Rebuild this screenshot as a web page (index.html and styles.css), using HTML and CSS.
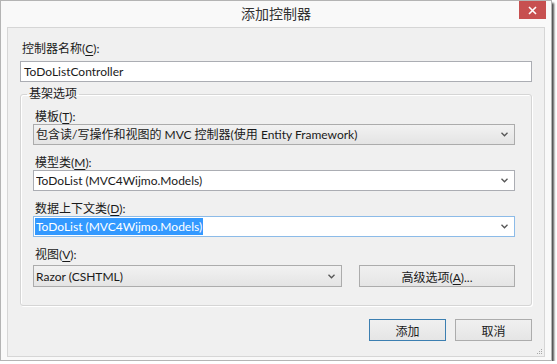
FILE: index.html
```html
<!DOCTYPE html>
<html lang="zh-CN">
  <head>
    <meta charset="UTF-8" />
    <title>添加控制器</title>
    <link rel="stylesheet" href="styles.css">
  </head>
  <body>
    <div class="window">
      <div class="titlebar">
        <span class="title">添加控制器</span>
        <button class="close" aria-label="关闭">
          <svg width="9" height="9" viewBox="0 0 9 9">
            <path d="M1 1 L8 8 M8 1 L1 8" stroke="#fff" stroke-width="1.6" />
          </svg>
        </button>
      </div>

      <div class="client">
        <div class="label">控制器名称(<u>C</u>):</div>
        <div class="textbox">ToDoListController</div>

        <fieldset class="group">
          <legend>基架选项</legend>

          <div class="field">
            <div class="label">模板(<u>T</u>):</div>
            <div class="combo readonly">
              <span class="value">包含读/写操作和视图的 MVC 控制器(使用 Entity Framework)</span>
              <svg class="arrow" width="7" height="5" viewBox="0 0 7 5"><path d="M0.5 0.8 L3.5 3.8 L6.5 0.8" fill="none" stroke="#555" stroke-width="1.3" /></svg>
            </div>
          </div>

          <div class="field">
            <div class="label">模型类(<u>M</u>):</div>
            <div class="combo">
              <span class="value">ToDoList (MVC4Wijmo.Models)</span>
              <svg class="arrow" width="7" height="5" viewBox="0 0 7 5"><path d="M0.5 0.8 L3.5 3.8 L6.5 0.8" fill="none" stroke="#555" stroke-width="1.3" /></svg>
            </div>
          </div>

          <div class="field">
            <div class="label">数据上下文类(<u>D</u>):</div>
            <div class="combo focused">
              <span class="value"><span class="selection">ToDoList (MVC4Wijmo.Models)</span></span>
              <svg class="arrow" width="7" height="5" viewBox="0 0 7 5"><path d="M0.5 0.8 L3.5 3.8 L6.5 0.8" fill="none" stroke="#555" stroke-width="1.3" /></svg>
            </div>
          </div>

          <div class="field">
            <div class="label">视图(<u>V</u>):</div>
            <div class="view_row">
              <div class="combo readonly view">
                <span class="value">Razor (CSHTML)</span>
                <svg class="arrow" width="7" height="5" viewBox="0 0 7 5"><path d="M0.5 0.8 L3.5 3.8 L6.5 0.8" fill="none" stroke="#555" stroke-width="1.3" /></svg>
              </div>
              <button class="btn advanced">高级选项(<u>A</u>)...</button>
            </div>
          </div>
        </fieldset>

        <div class="actions">
          <button class="btn default">添加</button>
          <button class="btn">取消</button>
        </div>

        <svg class="grip" width="7" height="7" viewBox="0 0 7 7">
          <rect x="5" y="1" width="1" height="1" fill="#a8a8a8" />
          <rect x="3" y="3" width="1" height="1" fill="#a8a8a8" />
          <rect x="5" y="3" width="1" height="1" fill="#a8a8a8" />
          <rect x="1" y="5" width="1" height="1" fill="#a8a8a8" />
          <rect x="3" y="5" width="1" height="1" fill="#a8a8a8" />
          <rect x="5" y="5" width="1" height="1" fill="#a8a8a8" />
        </svg>
      </div>
    </div>
  </body>
</html>
```
FILE: styles.css
```css
* {
  box-sizing: border-box;
}
body {
  margin: 0;
  background: #fff;
  font-family: Lato, "Noto Sans CJK SC", sans-serif;
  font-size: 12px;
  color: #1a1a1a;
}
u {
  text-decoration-thickness: 1px;
  text-underline-offset: 2px;
}

.window {
  width: 552px;
  padding: 0 6px 3px 6px;
  background: #f9f9f9;
  border: 1px solid #b4b4b4;
  box-shadow: 2px 3px 2px rgba(0, 0, 0, 0.7);
}

.titlebar {
  display: grid;
  grid-template-columns: 1fr auto 1fr;
  height: 26px;
  margin: 0 -6px;
  padding: 0 5px;
}
.title {
  grid-column: 2;
  line-height: 26px;
  font-size: 14px;
  color: #333;
}
.close {
  grid-column: 3;
  justify-self: end;
  align-self: start;
  width: 27px;
  height: 18px;
  border: none;
  padding: 0;
  background: #c75050;
  display: flex;
  align-items: center;
  justify-content: center;
}

.client {
  position: relative;
  background: #f0f0f0;
  border: 1px solid #d6d6d6;
  padding: 13px 12px 15px 12px;
}

.label {
  line-height: 15px;
  padding-left: 2px;
}

.textbox {
  margin-top: 5px;
  height: 21px;
  line-height: 19px;
  padding-left: 3px;
  background: #fff;
  border: 1px solid #abadb3;
}

.group {
  margin: 5px 0 0 0;
  padding: 8px 16px 18px 12px;
  border: 1px solid #d5d5d5;
  border-radius: 3px;
  box-shadow: inset 1px 1px 0 #fff, 1px 1px 0 #fff;
}
.group legend {
  margin-left: -6px;
  padding: 0 2px;
  line-height: 14px;
}

.field + .field {
  margin-top: 10px;
}

.combo {
  display: flex;
  align-items: center;
  height: 21px;
  padding: 0 6px 0 2px;
  background: #fff;
  border: 1px solid #abadb3;
}
.combo .value {
  flex: 1;
  white-space: nowrap;
  overflow: hidden;
  line-height: 19px;
}
.combo.readonly {
  background: linear-gradient(#f2f2f2, #e4e4e4);
  border-color: #acacac;
}
.combo.focused {
  border-color: #8cbbe8;
  padding-left: 1px;
}
.selection {
  background: #3399ff;
  color: #fff;
  padding: 1px 1px;
}

.view_row {
  display: flex;
  justify-content: space-between;
  margin-top: 3px;
}
.combo.view {
  width: 309px;
  height: 22px;
}

.btn {
  height: 22px;
  padding: 0;
  font: inherit;
  color: #1a1a1a;
  background: linear-gradient(#f0f0f0, #e5e5e5);
  border: 1px solid #acacac;
}
.btn.advanced {
  width: 156px;
}
.btn.default {
  border-color: #3c7fb1;
}

.actions {
  display: flex;
  justify-content: flex-end;
  gap: 9px;
  margin-top: 13px;
}
.actions .btn {
  width: 77px;
}

.grip {
  position: absolute;
  right: 1px;
  bottom: 1px;
}
```
